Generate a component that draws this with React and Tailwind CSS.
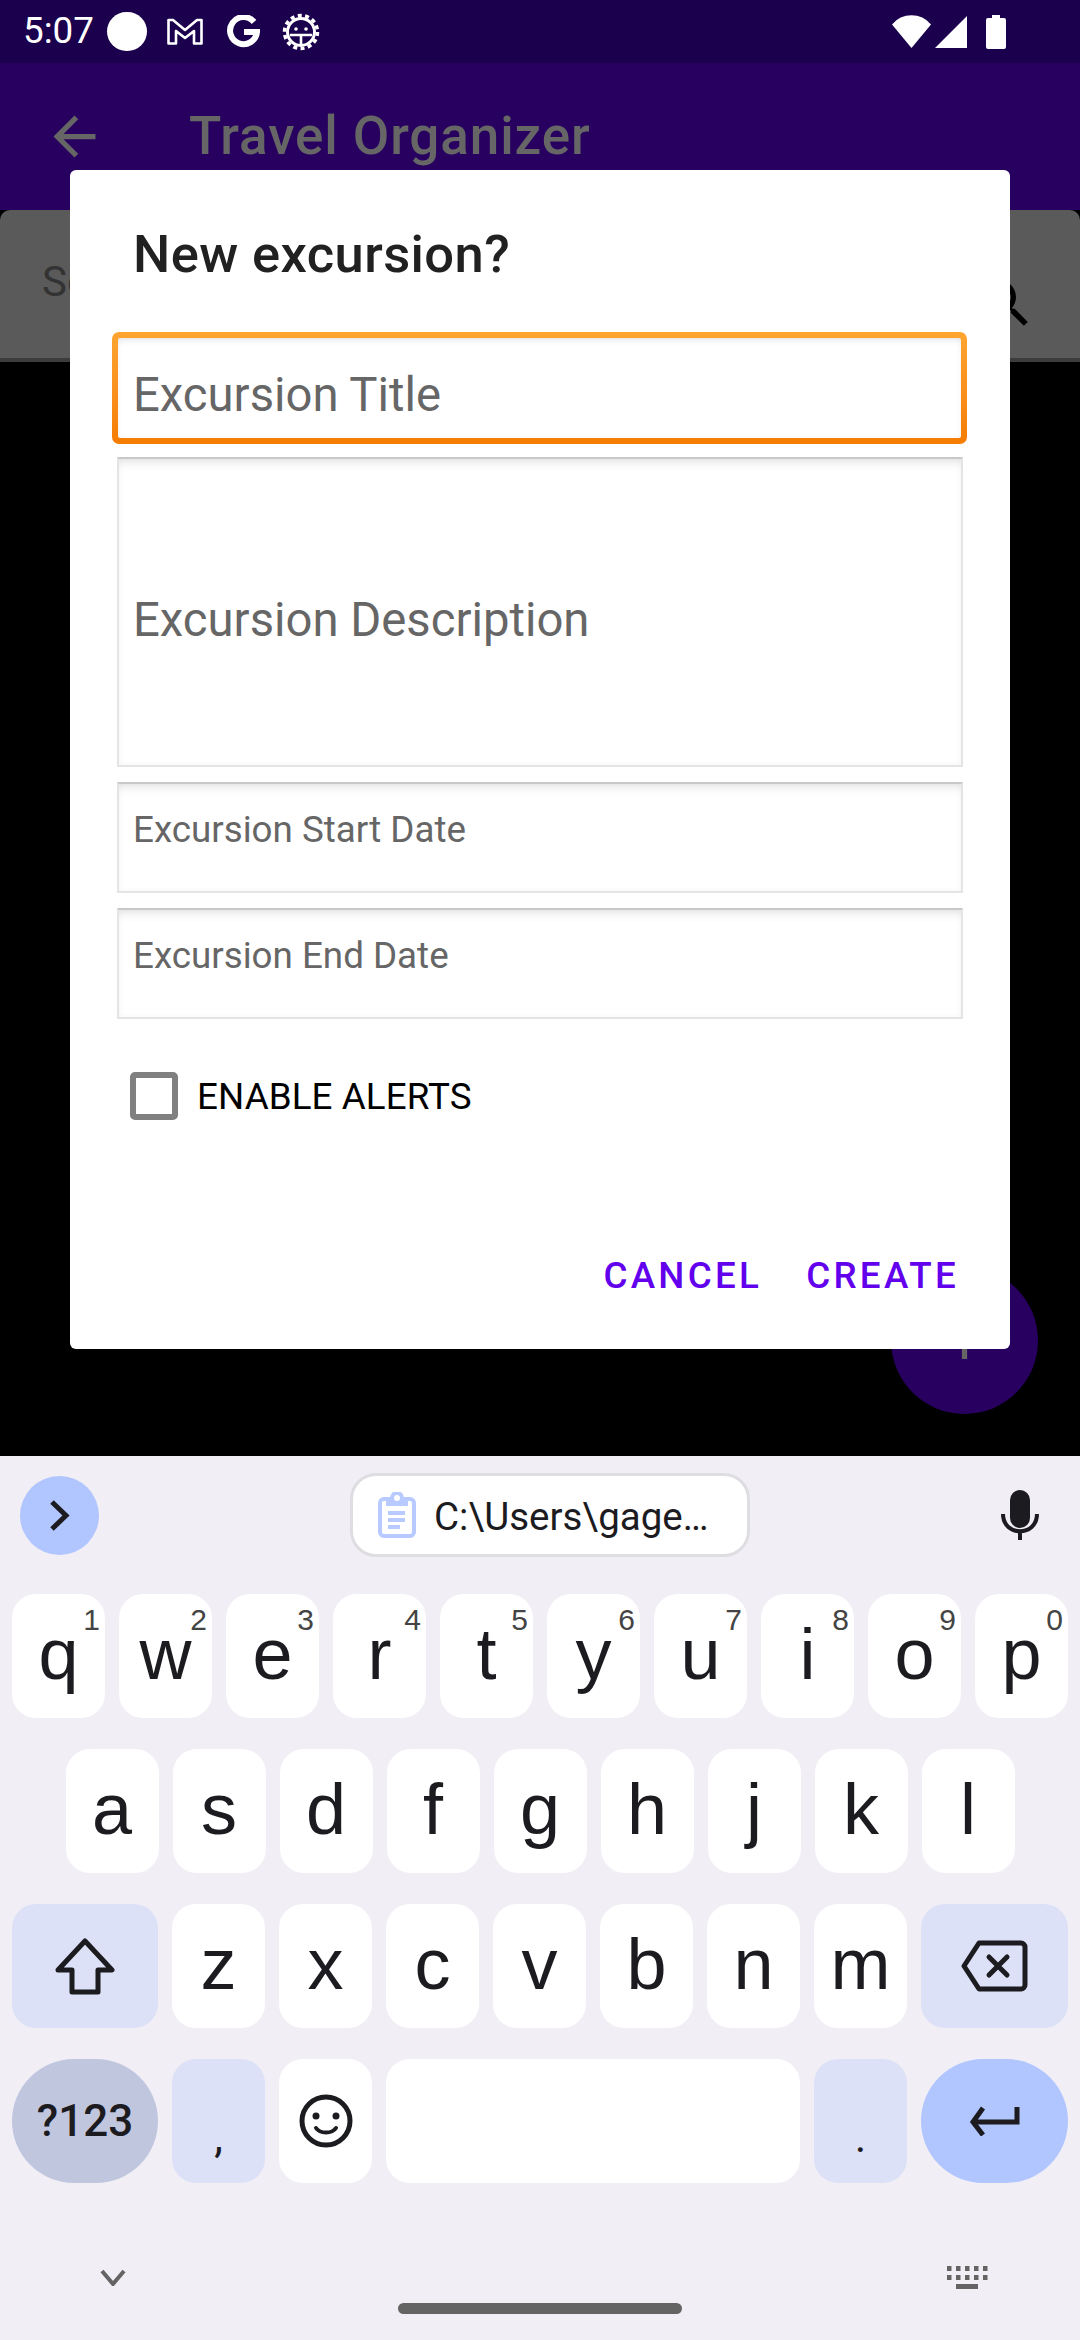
const INK = '#1c1b1f'

const StatusBar = () => (
  <div className="flex h-[63px] shrink-0 items-center bg-[#1a004d] text-white">
    <span className="ml-[23px] w-[70px] text-[36.75px] leading-none">5:07</span>
    <div className="ml-[14px] h-[39px] w-[40px] rounded-full bg-white" />
    <svg className="ml-[20px]" width="36" height="27" viewBox="0 0 36 27" fill="none" stroke="white" strokeWidth="2.6" strokeLinejoin="round">
      <path d="M1.5 2 L6 2 L18 12 L30 2 L34.5 2 L34.5 25.5 L27 25.5 L27 13 L18 20 L9 13 L9 25.5 L1.5 25.5Z" />
    </svg>
    <svg className="ml-[24px]" width="33" height="33" viewBox="0 0 33 33" fill="none" stroke="white" strokeWidth="6">
      <path d="M27 7 A13.5 13.5 0 1 0 30 17 H17" />
    </svg>
    <svg className="ml-[22px]" width="38" height="38" viewBox="0 0 38 38" fill="none" stroke="white">
      <circle cx="19" cy="19" r="13.5" strokeWidth="3" />
      <circle cx="19" cy="19" r="16.5" strokeWidth="3.5" strokeDasharray="4 3.4" />
      <path d="M8 22 H30 M19 22 V32" strokeWidth="2.6" />
      <circle cx="14" cy="16" r="1.8" fill="white" stroke="none" />
      <circle cx="24" cy="16" r="1.8" fill="white" stroke="none" />
    </svg>
    <svg className="ml-[572px]" width="39" height="33" viewBox="0 0 39 33" fill="white">
      <path d="M19.5 33 L0 9.5 A25 25 0 0 1 39 9.5 Z" />
    </svg>
    <svg className="ml-[4px]" width="32" height="32" viewBox="0 0 32 32" fill="white">
      <path d="M32 0 V32 H0 Z" />
    </svg>
    <svg className="ml-[19px]" width="20" height="34" viewBox="0 0 20 34" fill="white">
      <path d="M6 0 H14 V3 H18 A2 2 0 0 1 20 5 V32 A2 2 0 0 1 18 34 H2 A2 2 0 0 1 0 32 V5 A2 2 0 0 1 2 3 H6 Z" />
    </svg>
  </div>
)

const AppBar = () => (
  <div className="flex h-[147px] shrink-0 items-center bg-[#28005f] text-[#666666]">
    <svg className="ml-[43px]" width="63" height="63" viewBox="0 0 24 24" fill="#666666">
      <path d="M20 11H7.83l5.59-5.59L12 4l-8 8 8 8 1.41-1.41L7.83 13H20v-2z" />
    </svg>
    <span className="ml-[83px] text-[53px] font-medium leading-none tracking-[0.9px]">Travel Organizer</span>
  </div>
)

const SearchBar = () => (
  <div className="flex h-[152px] shrink-0 items-center justify-between rounded-t-[10px] border-b-4 border-[#3c3c3c] bg-[#5a5a5a] pb-[4px] pl-[42px] pr-[43px]">
    <span className="text-[42px] leading-none text-[#333333]">Search</span>
    <svg className="mt-[42px]" width="63" height="63" viewBox="0 0 24 24" fill="#000000">
      <path d="M15.5 14h-.79l-.28-.27C15.41 12.59 16 11.11 16 9.5 16 5.91 13.09 3 9.5 3S3 5.91 3 9.5 5.91 16 9.5 16c1.61 0 3.09-.59 4.23-1.57l.27.28v.79l5 4.99L20.49 19l-4.99-5zm-6 0C7.01 14 5 11.99 5 9.5S7.01 5 9.5 5 14 7.01 14 9.5 11.99 14 9.5 14z" />
    </svg>
  </div>
)

const fieldClass =
  'ml-[47px] flex w-[846px] border-2 border-[#e4e4e4] border-t-[#c8c8c8] pl-[14px] text-[#666666] shadow-[inset_0_10px_12px_-8px_rgba(0,0,0,0.12),inset_0_0_6px_rgba(0,0,0,0.04)]'

const Dialog = () => (
  <div className="absolute left-[70px] top-[170px] z-10 h-[1179px] w-[940px] rounded-[6px] bg-white">
    <h2 className="ml-[63px] mt-[53px] text-[52.5px] font-medium leading-[62px] tracking-[0.4px] text-[#212121]">New excursion?</h2>

    <div className="ml-[42px] mt-[47px] h-[112px] w-[855px] rounded-[7px] bg-linear-to-b from-[#ffa530] to-[#f57c00] p-[6px]">
      <div className="flex h-full items-end rounded-[2px] bg-white pb-[15px] pl-[15px] text-[47.25px] leading-[56px] text-[#666666] shadow-[inset_0_6px_10px_-6px_rgba(0,0,0,0.12),inset_0_0_6px_rgba(0,0,0,0.05)]">
        Excursion Title
      </div>
    </div>

    <div className={`${fieldClass} mt-[13px] h-[310px] items-center pt-[16px] text-[47.25px] leading-[56px]`}>
      Excursion Description
    </div>
    <div className={`${fieldClass} mt-[15px] h-[111px] pt-[24px] text-[36.75px] leading-[44px]`}>
      Excursion Start Date
    </div>
    <div className={`${fieldClass} mt-[15px] h-[111px] pt-[24px] text-[36.75px] leading-[44px]`}>
      Excursion End Date
    </div>

    <div className="ml-[60px] mt-[53px] flex h-[48px] items-center">
      <div className="h-[48px] w-[48px] rounded-[5px] border-[6px] border-[#808080]" />
      <span className="ml-[19px] mt-[2px] text-[36.75px] leading-none tracking-[0.1px] text-black">ENABLE ALERTS</span>
    </div>

    <div className="mr-[51px] mt-[134px] flex justify-end gap-[44px] text-[36.75px] font-medium leading-[44px] tracking-[3.28px] text-[#6200ee]">
      <span>CANCEL</span>
      <span>CREATE</span>
    </div>
  </div>
)

const Key = ({ label, hint, className = 'w-[93px] bg-white', children }) => (
  <div className={`relative flex h-[124px] items-center justify-center rounded-[24px] ${className}`}>
    {label && <span className="pb-[5px] text-[72px] leading-none">{label}</span>}
    {children}
    {hint && (
      <span className="absolute right-[5px] top-[8px] text-[30px] leading-[36px] text-[#444444]">{hint}</span>
    )}
  </div>
)

const Row = ({ letters }) =>
  letters.map(([label, hint]) => <Key key={label} label={label} hint={hint} />)

const row1 = [['q', '1'], ['w', '2'], ['e', '3'], ['r', '4'], ['t', '5'], ['y', '6'], ['u', '7'], ['i', '8'], ['o', '9'], ['p', '0']]
const row2 = [['a'], ['s'], ['d'], ['f'], ['g'], ['h'], ['j'], ['k'], ['l']]
const row3 = [['z'], ['x'], ['c'], ['v'], ['b'], ['n'], ['m']]

const Keyboard = () => (
  <div className="flex h-[884px] shrink-0 flex-col bg-[#f1eff5] text-[#1c1b1f] [font-family:'Liberation_Sans',sans-serif]">
    <div className="flex h-[118px] items-center [font-family:Roboto,sans-serif]">
      <div className="ml-[20px] flex h-[79px] w-[79px] items-center justify-center rounded-full bg-[#b1c5ff]">
        <svg width="21" height="31" viewBox="0 0 21 31" fill="none" stroke={INK} strokeWidth="5">
          <path d="M3 2 L17 15.5 L3 29" />
        </svg>
      </div>
      <div className="ml-[251px] flex h-[84px] w-[400px] items-center rounded-[26px] border-[3px] border-[#dedde2] bg-white pl-[25px]">
        <svg width="38" height="46" viewBox="0 0 38 46" fill="none" stroke="#b8caff" strokeWidth="4">
          <rect x="2" y="7" width="34" height="37" rx="4" />
          <path d="M10 8 H28 V12 H10 Z" fill="#b8caff" />
          <circle cx="19" cy="6" r="5" fill="white" />
          <path d="M10 21 H27 M10 28 H27 M10 35 H22" />
        </svg>
        <span className="ml-[18px] mt-[4px] text-[38.5px] leading-none">C:\Users\gage…</span>
      </div>
      <svg className="ml-auto mr-[41px]" width="38" height="50" viewBox="0 0 38 50" fill="none" stroke={INK} strokeWidth="4">
        <rect x="9" y="0" width="20" height="38" rx="10" fill={INK} stroke="none" />
        <path d="M2 24 C2 47 36 47 36 24 M19 40 V50" />
      </svg>
    </div>

    <div className="mt-[20px] flex flex-col gap-[31px] px-[12px]">
      <div className="flex justify-between">
        <Row letters={row1} />
      </div>
      <div className="flex justify-center gap-[14px]">
        <Row letters={row2} />
      </div>
      <div className="flex justify-between">
        <Key className="w-[146px] bg-[#dde1f8]">
          <svg width="60" height="57" viewBox="0 0 60 57" fill="none" stroke={INK} strokeWidth="5" strokeLinejoin="round">
            <path d="M30 3 L57 32 H43 V54 H17 V32 H3 Z" />
          </svg>
        </Key>
        <Row letters={row3} />
        <Key className="w-[147px] bg-[#dde1f8]">
          <svg width="67" height="52" viewBox="0 0 67 52" fill="none" stroke={INK} strokeWidth="5" strokeLinecap="round" strokeLinejoin="round">
            <path d="M18 3 H60 A4 4 0 0 1 64 7 V45 A4 4 0 0 1 60 49 H18 L3 26 Z" />
            <path d="M28 17 L46 35 M46 17 L28 35" />
          </svg>
        </Key>
      </div>
      <div className="flex justify-between">
        <Key className="w-[146px] rounded-[62px] bg-[#c0c6de]">
          <span className="text-[44px] font-medium leading-none [font-family:Roboto,sans-serif]">?123</span>
        </Key>
        <Key className="w-[93px] items-end bg-[#dde1f8] pb-[24px]">
          <span className="text-[44px] leading-[44px] [font-family:Roboto,sans-serif]">,</span>
        </Key>
        <Key>
          <svg width="54" height="54" viewBox="0 0 54 54" fill="none" stroke={INK} strokeWidth="5" strokeLinecap="round">
            <circle cx="27" cy="27" r="24" />
            <circle cx="17" cy="22" r="3.5" fill={INK} stroke="none" />
            <circle cx="37" cy="22" r="3.5" fill={INK} stroke="none" />
            <path d="M17 34 C21 40 33 40 37 34" strokeWidth="4" />
          </svg>
        </Key>
        <Key className="w-[414px] bg-white" />
        <Key className="w-[93px] items-end bg-[#dde1f8] pb-[24px]">
          <span className="text-[44px] leading-[44px] [font-family:Roboto,sans-serif]">.</span>
        </Key>
        <Key className="w-[147px] rounded-[62px] bg-[#b1c5ff]">
          <svg width="51" height="30" viewBox="0 0 51 30" fill="none" stroke={INK} strokeWidth="5">
            <path d="M48 1 V16 H5" />
            <path d="M14 2 L4 16 L14 29" />
          </svg>
        </Key>
      </div>
    </div>

    <div className="mt-[83px] flex h-[23px] items-center justify-between pl-[100px] pr-[92px]">
      <svg width="26" height="17" viewBox="0 0 26 17" fill="none" stroke="#646464" strokeWidth="4">
        <path d="M2 2 L13 15 L24 2" />
      </svg>
      <svg width="41" height="23" viewBox="0 0 41 23" fill="#646464">
        {[0, 9, 18, 27, 36].map((x) => (
          <g key={x}>
            <rect x={x} y="0" width="4.5" height="5" />
            <rect x={x} y="9" width="4.5" height="5" />
          </g>
        ))}
        <rect x="9" y="18" width="22" height="5" />
      </svg>
    </div>
    <div className="mx-auto mt-[14px] h-[11px] w-[284px] rounded-full bg-[#646464]" />
  </div>
)

const App = () => (
  <div className="relative flex h-[2340px] w-[1080px] flex-col overflow-hidden bg-black [font-family:Roboto,sans-serif]">
    <StatusBar />
    <AppBar />
    <SearchBar />
    <div className="flex-1" />
    <Keyboard />

    <div className="absolute left-[891px] top-[1267px] flex h-[147px] w-[147px] items-center justify-center rounded-full bg-[#28005f]">
      <svg width="63" height="63" viewBox="0 0 24 24" fill="#666666">
        <path d="M19 13h-6v6h-2v-6H5v-2h6V5h2v6h6v2z" />
      </svg>
    </div>
    <Dialog />
  </div>
)

export default App
